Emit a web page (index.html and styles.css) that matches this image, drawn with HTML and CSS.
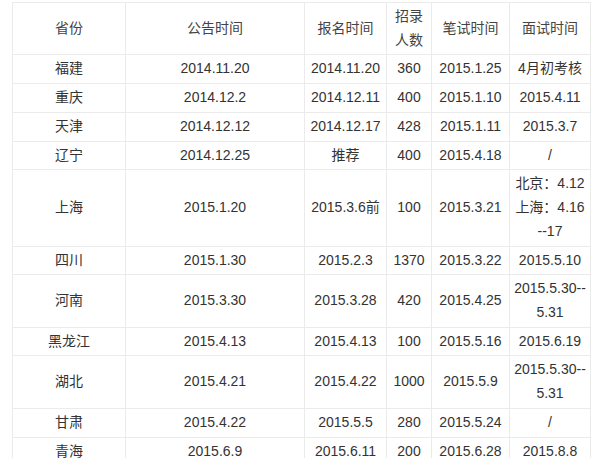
FILE: index.html
```html
<!DOCTYPE html>
<html lang="zh-CN">
<head>
<meta charset="utf-8">
<title>招考时间表</title>
<link rel="stylesheet" href="styles.css">
</head>
<body>
<table class="schedule">
  <colgroup>
    <col class="c-prov">
    <col class="c-notice">
    <col class="c-reg">
    <col class="c-num">
    <col class="c-written">
    <col class="c-interview">
  </colgroup>
  <tr class="head">
    <td>省份</td>
    <td>公告时间</td>
    <td>报名时间</td>
    <td>招录<br>人数</td>
    <td>笔试时间</td>
    <td>面试时间</td>
  </tr>
  <tr><td>福建</td><td>2014.11.20</td><td>2014.11.20</td><td>360</td><td>2015.1.25</td><td>4月初考核</td></tr>
  <tr><td>重庆</td><td>2014.12.2</td><td>2014.12.11</td><td>400</td><td>2015.1.10</td><td>2015.4.11</td></tr>
  <tr><td>天津</td><td>2014.12.12</td><td>2014.12.17</td><td>428</td><td>2015.1.11</td><td>2015.3.7</td></tr>
  <tr><td>辽宁</td><td>2014.12.25</td><td>推荐</td><td>400</td><td>2015.4.18</td><td>/</td></tr>
  <tr><td>上海</td><td>2015.1.20</td><td>2015.3.6前</td><td>100</td><td>2015.3.21</td><td>北京：4.12<br>上海：4.16<br>--17</td></tr>
  <tr><td>四川</td><td>2015.1.30</td><td>2015.2.3</td><td>1370</td><td>2015.3.22</td><td>2015.5.10</td></tr>
  <tr><td>河南</td><td>2015.3.30</td><td>2015.3.28</td><td>420</td><td>2015.4.25</td><td>2015.5.30--<br>5.31</td></tr>
  <tr><td>黑龙江</td><td>2015.4.13</td><td>2015.4.13</td><td>100</td><td>2015.5.16</td><td>2015.6.19</td></tr>
  <tr><td>湖北</td><td>2015.4.21</td><td>2015.4.22</td><td>1000</td><td>2015.5.9</td><td>2015.5.30--<br>5.31</td></tr>
  <tr><td>甘肃</td><td>2015.4.22</td><td>2015.5.5</td><td>280</td><td>2015.5.24</td><td>/</td></tr>
  <tr><td>青海</td><td>2015.6.9</td><td>2015.6.11</td><td>200</td><td>2015.6.28</td><td>2015.8.8</td></tr>
</table>
</body>
</html>
```

FILE: styles.css
```css
html, body {
  margin: 0;
  padding: 0;
  background: #ffffff;
}

body {
  font-family: "Liberation Sans", "Noto Sans CJK SC", sans-serif;
  font-size: 14px;
  color: #333333;
}

.schedule {
  border-collapse: collapse;
  table-layout: fixed;
  width: 578px;
  margin: 2px 0 0 12px;
}

.c-prov { width: 113px; }
.c-notice { width: 179px; }
.c-reg { width: 82px; }
.c-num { width: 45px; }
.c-written { width: 78px; }
.c-interview { width: 81px; }

.schedule td {
  border: 1px solid #ebebeb;
  padding: 2px 0 1.9px;
  line-height: 23.8px;
  text-align: center;
  vertical-align: middle;
  white-space: nowrap;
}

.schedule .head td {
  color: #444444;
}
```
